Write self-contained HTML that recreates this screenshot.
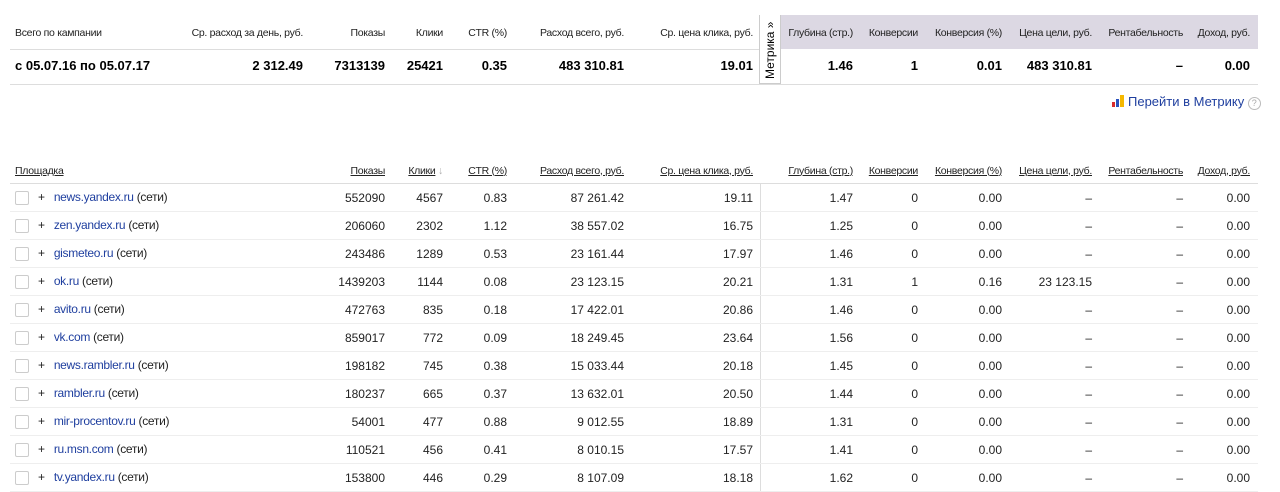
<!DOCTYPE html>
<html><head><meta charset="utf-8"><style>
body{margin:0;width:1280px;height:486px;overflow:hidden;background:#fff;font-family:"Liberation Sans",Arial,sans-serif;color:#000;position:relative}
.a{position:absolute;white-space:nowrap}
.h{font-size:10.5px;letter-spacing:-0.3px;color:#222;top:27px}
.dv{font-size:13px;font-weight:bold;top:58px}
table{position:absolute;left:10px;width:1248px;border-collapse:collapse;table-layout:fixed}
td{padding:0;text-align:right;white-space:nowrap}
.t2 tr.h td{font-size:10.5px;letter-spacing:-0.3px;height:25px;border-bottom:1px solid #ddd;vertical-align:middle}
.t2 tr.h td u{color:#222}
.t2 tr.r td{font-size:12px;height:27px;border-bottom:1px solid #eee;color:#222}
.t2 tr.r td.l{letter-spacing:-0.3px}
td.l{text-align:left;padding-left:5px}
.cb{display:inline-block;width:12px;height:12px;border:1px solid #ccc;border-radius:2px;vertical-align:middle;margin-right:9px}
a{color:#1f3f9f;text-decoration:none}
.vl{border-right:1px solid #ddd}
</style></head><body>
<div class="a" style="left:10px;top:49px;width:749px;height:1px;background:#ddd"></div>
<div class="a" style="left:10px;top:84px;width:1248px;height:1px;background:#ddd"></div>
<div class="a" style="left:781px;top:15px;width:477px;height:34px;background:#dcd8e3"></div>
<div class="a" style="left:759px;top:15px;width:20px;height:68px;border:1px solid #ccc;border-top:none;background:#fff"><span style="position:absolute;left:3px;top:64px;transform:rotate(-90deg);transform-origin:0 0;font-size:12px;white-space:nowrap">Метрика »</span></div>
<span class="a h" style="left:15px">Всего по кампании</span>
<span class="a h" style="right:977px">Ср. расход за день, руб.</span>
<span class="a h" style="right:895px">Показы</span>
<span class="a h" style="right:837px">Клики</span>
<span class="a h" style="right:773px">CTR (%)</span>
<span class="a h" style="right:656px">Расход всего, руб.</span>
<span class="a h" style="right:527px">Ср. цена клика, руб.</span>
<span class="a h" style="right:427px">Глубина (стр.)</span>
<span class="a h" style="right:362px">Конверсии</span>
<span class="a h" style="right:278px">Конверсия (%)</span>
<span class="a h" style="right:188px">Цена цели, руб.</span>
<span class="a h" style="right:97px">Рентабельность</span>
<span class="a h" style="right:30px">Доход, руб.</span>
<span class="a dv" style="left:15px">с 05.07.16 по 05.07.17</span>
<span class="a dv" style="right:977px">2 312.49</span>
<span class="a dv" style="right:895px">7313139</span>
<span class="a dv" style="right:837px">25421</span>
<span class="a dv" style="right:773px">0.35</span>
<span class="a dv" style="right:656px">483 310.81</span>
<span class="a dv" style="right:527px">19.01</span>
<span class="a dv" style="right:427px">1.46</span>
<span class="a dv" style="right:362px">1</span>
<span class="a dv" style="right:278px">0.01</span>
<span class="a dv" style="right:188px">483 310.81</span>
<span class="a dv" style="right:97px">–</span>
<span class="a dv" style="right:30px">0.00</span>
<div class="a" style="left:1112px;top:94px;font-size:13px;color:#1f3f9f">
<svg width="12" height="12" style="vertical-align:-1px;margin-right:4px"><rect x="0" y="7" width="3" height="5" fill="#d92b2b"/><rect x="4" y="4" width="3" height="8" fill="#2a52be"/><rect x="8" y="0" width="4" height="12" fill="#f5b800"/></svg>Перейти в Метрику <span style="display:inline-block;width:11px;height:11px;border:1px solid #bbb;border-radius:50%;color:#aaa;font-size:9px;text-align:center;line-height:11px;vertical-align:0">?</span></div>
<table class="t2" style="top:158px">
<colgroup><col style="width:293px"><col style="width:82px"><col style="width:58px"><col style="width:64px"><col style="width:117px"><col style="width:129px"><col style="width:7px"><col style="width:21px"><col style="width:72px"><col style="width:65px"><col style="width:84px"><col style="width:90px"><col style="width:91px"><col style="width:67px"><col style="width:8px"></colgroup>
<tr class="h"><td class="l"><u>Площадка</u></td><td><u>Показы</u></td><td><u>Клики</u> <span style="color:#aaa">↓</span></td><td><u>CTR (%)</u></td><td><u>Расход всего, руб.</u></td><td><u>Ср. цена клика, руб.</u></td><td></td><td></td><td><u>Глубина (стр.)</u></td><td><u>Конверсии</u></td><td><u>Конверсия (%)</u></td><td><u>Цена цели, руб.</u></td><td><u>Рентабельность</u></td><td><u>Доход, руб.</u></td><td></td></tr>
<tr class="r"><td class="l"><span class="cb"></span>+&nbsp;&nbsp; <a>news.yandex.ru</a> (сети)</td><td>552090</td><td>4567</td><td>0.83</td><td>87 261.42</td><td>19.11</td><td class="vl"></td><td></td><td>1.47</td><td>0</td><td>0.00</td><td>–</td><td>–</td><td>0.00</td><td></td></tr>
<tr class="r"><td class="l"><span class="cb"></span>+&nbsp;&nbsp; <a>zen.yandex.ru</a> (сети)</td><td>206060</td><td>2302</td><td>1.12</td><td>38 557.02</td><td>16.75</td><td class="vl"></td><td></td><td>1.25</td><td>0</td><td>0.00</td><td>–</td><td>–</td><td>0.00</td><td></td></tr>
<tr class="r"><td class="l"><span class="cb"></span>+&nbsp;&nbsp; <a>gismeteo.ru</a> (сети)</td><td>243486</td><td>1289</td><td>0.53</td><td>23 161.44</td><td>17.97</td><td class="vl"></td><td></td><td>1.46</td><td>0</td><td>0.00</td><td>–</td><td>–</td><td>0.00</td><td></td></tr>
<tr class="r"><td class="l"><span class="cb"></span>+&nbsp;&nbsp; <a>ok.ru</a> (сети)</td><td>1439203</td><td>1144</td><td>0.08</td><td>23 123.15</td><td>20.21</td><td class="vl"></td><td></td><td>1.31</td><td>1</td><td>0.16</td><td>23 123.15</td><td>–</td><td>0.00</td><td></td></tr>
<tr class="r"><td class="l"><span class="cb"></span>+&nbsp;&nbsp; <a>avito.ru</a> (сети)</td><td>472763</td><td>835</td><td>0.18</td><td>17 422.01</td><td>20.86</td><td class="vl"></td><td></td><td>1.46</td><td>0</td><td>0.00</td><td>–</td><td>–</td><td>0.00</td><td></td></tr>
<tr class="r"><td class="l"><span class="cb"></span>+&nbsp;&nbsp; <a>vk.com</a> (сети)</td><td>859017</td><td>772</td><td>0.09</td><td>18 249.45</td><td>23.64</td><td class="vl"></td><td></td><td>1.56</td><td>0</td><td>0.00</td><td>–</td><td>–</td><td>0.00</td><td></td></tr>
<tr class="r"><td class="l"><span class="cb"></span>+&nbsp;&nbsp; <a>news.rambler.ru</a> (сети)</td><td>198182</td><td>745</td><td>0.38</td><td>15 033.44</td><td>20.18</td><td class="vl"></td><td></td><td>1.45</td><td>0</td><td>0.00</td><td>–</td><td>–</td><td>0.00</td><td></td></tr>
<tr class="r"><td class="l"><span class="cb"></span>+&nbsp;&nbsp; <a>rambler.ru</a> (сети)</td><td>180237</td><td>665</td><td>0.37</td><td>13 632.01</td><td>20.50</td><td class="vl"></td><td></td><td>1.44</td><td>0</td><td>0.00</td><td>–</td><td>–</td><td>0.00</td><td></td></tr>
<tr class="r"><td class="l"><span class="cb"></span>+&nbsp;&nbsp; <a>mir-procentov.ru</a> (сети)</td><td>54001</td><td>477</td><td>0.88</td><td>9 012.55</td><td>18.89</td><td class="vl"></td><td></td><td>1.31</td><td>0</td><td>0.00</td><td>–</td><td>–</td><td>0.00</td><td></td></tr>
<tr class="r"><td class="l"><span class="cb"></span>+&nbsp;&nbsp; <a>ru.msn.com</a> (сети)</td><td>110521</td><td>456</td><td>0.41</td><td>8 010.15</td><td>17.57</td><td class="vl"></td><td></td><td>1.41</td><td>0</td><td>0.00</td><td>–</td><td>–</td><td>0.00</td><td></td></tr>
<tr class="r"><td class="l"><span class="cb"></span>+&nbsp;&nbsp; <a>tv.yandex.ru</a> (сети)</td><td>153800</td><td>446</td><td>0.29</td><td>8 107.09</td><td>18.18</td><td class="vl"></td><td></td><td>1.62</td><td>0</td><td>0.00</td><td>–</td><td>–</td><td>0.00</td><td></td></tr>
</table>
</body></html>
